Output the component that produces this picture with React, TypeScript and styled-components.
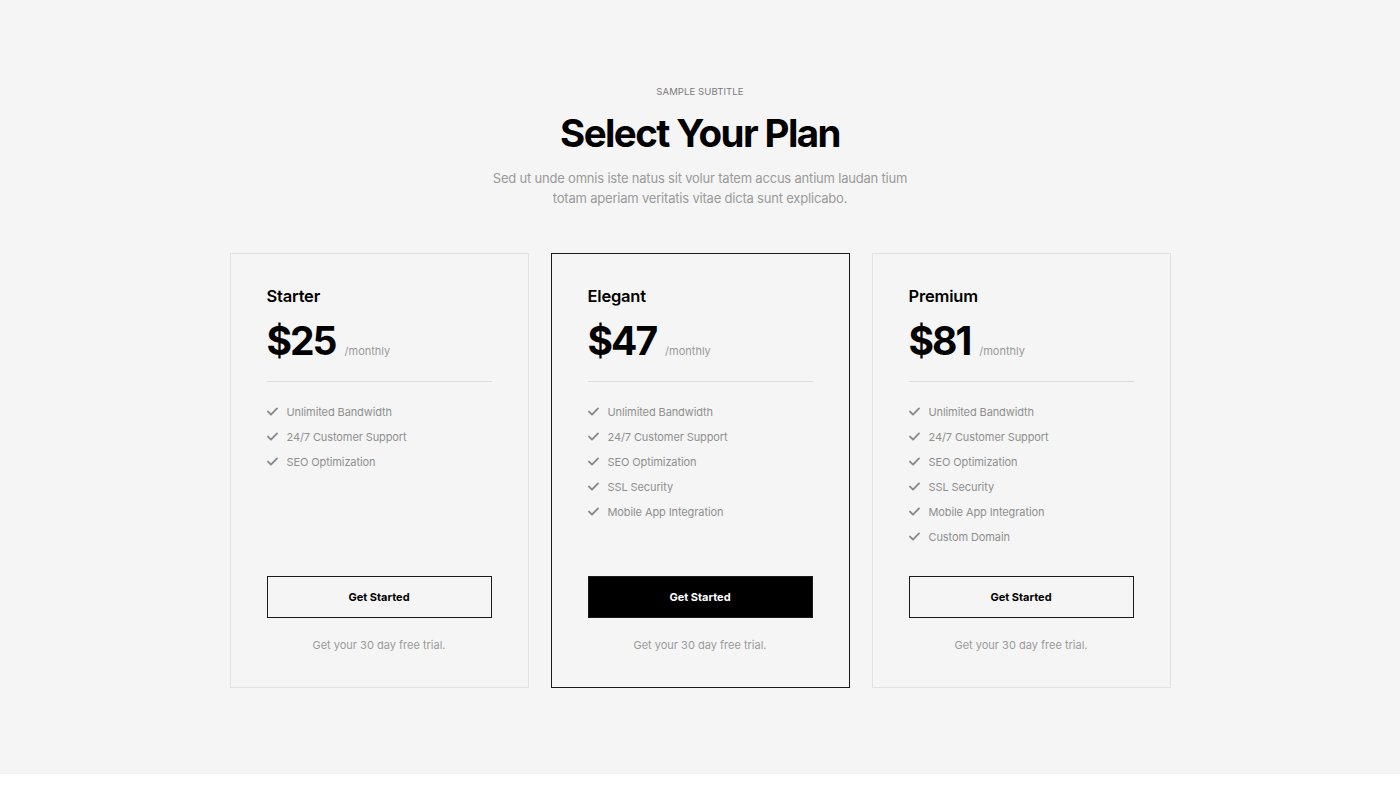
import React from "react";
import styled, { createGlobalStyle } from "styled-components";

const GlobalStyle = createGlobalStyle`
  * { box-sizing: border-box; }
  body {
    margin: 0;
    background: #ffffff;
    font-family: Inter, "Noto Sans", "Liberation Sans", sans-serif;
    -webkit-font-smoothing: antialiased;
  }
`;

const Section = styled.section`
  background: #f5f5f5;
  padding: 85px 0 86px;
  display: flex;
  flex-direction: column;
  align-items: center;
`;

const Subtitle = styled.div`
  font-size: 9.5px;
  line-height: 14px;
  color: #7a7a7a;
  text-transform: uppercase;
  letter-spacing: 0.1px;
`;

const Title = styled.h1`
  margin: 10px 0 0;
  font-size: 38.5px;
  line-height: 48px;
  font-weight: 700;
  letter-spacing: -1.6px;
  color: #000;
`;

const Lead = styled.p`
  margin: 11px 0 0;
  font-size: 13px;
  line-height: 20px;
  color: #9a9a9a;
  text-align: center;
  font-weight: 400;
  letter-spacing: -0.2px;
`;

const Grid = styled.div`
  margin-top: 45px;
  display: grid;
  grid-template-columns: repeat(3, 299px);
  gap: 22px;
  align-items: stretch;
`;

const Card = styled.div<{ $featured?: boolean }>`
  border: 1px solid ${(p) => (p.$featured ? "#1a1a1a" : "#e1e1e1")};
  padding: 30px 36px 33px;
  display: flex;
  flex-direction: column;
`;

const PlanName = styled.h3`
  margin: 0;
  font-size: 16.5px;
  line-height: 24px;
  font-weight: 600;
  color: #000;
  letter-spacing: -0.2px;
`;

const PriceRow = styled.div`
  margin-top: 9px;
  display: flex;
  align-items: baseline;
  gap: 9px;
  padding-bottom: 16px;
  border-bottom: 1px solid #dcdcdc;
`;

const Price = styled.span`
  font-size: 39px;
  line-height: 48px;
  font-weight: 700;
  letter-spacing: -2px;
  color: #000;
`;

const Period = styled.span`
  font-size: 11px;
  color: #9a9a9a;
`;

const Features = styled.ul`
  list-style: none;
  margin: 17px 0 0;
  padding: 0 0 27px;
  flex: 1;
`;

const Feature = styled.li`
  display: flex;
  align-items: center;
  gap: 9px;
  height: 25px;
  font-size: 11px;
  color: #8f8f8f;
  letter-spacing: -0.1px;
`;

const Button = styled.button<{ $featured?: boolean }>`
  height: 42px;
  width: 100%;
  border: 1px solid #1a1a1a;
  background: ${(p) => (p.$featured ? "#000" : "transparent")};
  color: ${(p) => (p.$featured ? "#fff" : "#000")};
  font-family: inherit;
  font-size: 11px;
  font-weight: 700;
  letter-spacing: 0;
  cursor: pointer;
`;

const Trial = styled.div`
  margin-top: 18px;
  text-align: center;
  font-size: 11px;
  line-height: 18px;
  color: #9a9a9a;
`;

const Check = () => (
  <svg width="11" height="9" viewBox="0 0 11 9" fill="none">
    <path d="M1 4.6 L4 7.6 L10 1.4" stroke="#8a8a8a" strokeWidth="1.9" strokeLinecap="round" strokeLinejoin="round" />
  </svg>
);

const plans = [
  { name: "Starter", price: "$25", features: ["Unlimited Bandwidth", "24/7 Customer Support", "SEO Optimization"] },
  {
    name: "Elegant",
    price: "$47",
    featured: true,
    features: ["Unlimited Bandwidth", "24/7 Customer Support", "SEO Optimization", "SSL Security", "Mobile App Integration"],
  },
  {
    name: "Premium",
    price: "$81",
    features: [
      "Unlimited Bandwidth",
      "24/7 Customer Support",
      "SEO Optimization",
      "SSL Security",
      "Mobile App Integration",
      "Custom Domain",
    ],
  },
];

export default function App() {
  return (
    <>
      <GlobalStyle />
      <Section>
        <Subtitle>Sample Subtitle</Subtitle>
        <Title>Select Your Plan</Title>
        <Lead>
          Sed ut unde omnis iste natus sit volur tatem accus antium laudan tium
          <br />
          totam aperiam veritatis vitae dicta sunt explicabo.
        </Lead>
        <Grid>
          {plans.map((p) => (
            <Card key={p.name} $featured={p.featured}>
              <PlanName>{p.name}</PlanName>
              <PriceRow>
                <Price>{p.price}</Price>
                <Period>/monthly</Period>
              </PriceRow>
              <Features>
                {p.features.map((f) => (
                  <Feature key={f}>
                    <Check />
                    {f}
                  </Feature>
                ))}
              </Features>
              <Button $featured={p.featured}>Get Started</Button>
              <Trial>Get your 30 day free trial.</Trial>
            </Card>
          ))}
        </Grid>
      </Section>
    </>
  );
}
